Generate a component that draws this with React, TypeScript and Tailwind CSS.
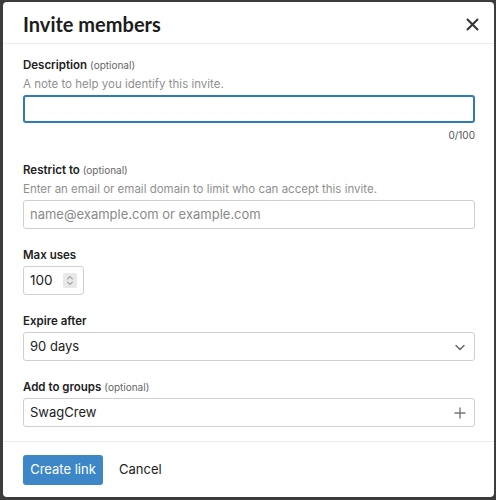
import React from "react";

const inter = { fontFamily: "Inter, 'Noto Sans', sans-serif" };

function Label({ text, optional }: { text: string; optional?: boolean }) {
  return (
    <div className="h-4 leading-4 text-[11.5px] font-semibold text-[#222]">
      {text}
      {optional && <span className="ml-[3px] text-[10px] font-normal text-[#666]">(optional)</span>}
    </div>
  );
}

function Help({ text }: { text: string }) {
  return <div className="mt-[2px] leading-[18px] text-[11.5px] text-[#8f8f8f]">{text}</div>;
}

export default function App() {
  return (
    <div className="w-[496px] h-[500px] bg-[#3c3c3c] pl-[3px] pt-[2px]" style={inter}>
      <div className="w-[491px] h-[495px] bg-white rounded-[4px] flex flex-col overflow-hidden">
        {/* header */}
        <div className="h-[42px] shrink-0 flex items-center justify-between pt-[3px] pl-5 pr-[14px] border-b border-[#ececec]">
          <h1 className="text-[20px] font-bold text-[#1c1c1c]" style={{ fontFamily: "Lato, sans-serif" }}>
            Invite members
          </h1>
          <button className="w-4 h-4 flex items-center justify-center text-[#333]">
            <svg width="13" height="13" viewBox="0 0 13 13" fill="none" stroke="currentColor" strokeWidth="2" strokeLinecap="round">
              <path d="M1.5 1.5l10 10M11.5 1.5l-10 10" />
            </svg>
          </button>
        </div>

        {/* body */}
        <div className="flex-1 pt-[13px] px-5">
          <Label text="Description" optional />
          <Help text="A note to help you identify this invite." />
          <div className="mt-[2px] h-[28px] w-[452px] rounded-[3px] border-2 border-[#2f79bd]" />
          <div className="mt-[5px] h-[14px] leading-[14px] w-[452px] text-right text-[10px] text-[#555]">0/100</div>

          <div className="mt-5">
            <Label text="Restrict to" optional />
            <Help text="Enter an email or email domain to limit who can accept this invite." />
            <div className="mt-[2px] h-[29px] w-[452px] rounded-[3px] border border-[#cfcfcf] flex items-center px-[6px] text-[13px] text-[#8a8a8a]">
              name@example.com or example.com
            </div>
          </div>

          <div className="mt-[18px]">
            <Label text="Max uses" />
            <div className="mt-[3px] h-[29px] w-[61px] rounded-[3px] border border-[#cfcfcf] flex items-center pl-[6px] pr-[6px] justify-between">
              <span className="text-[13.5px] text-[#222]">100</span>
              <span className="w-[14px] h-[15px] bg-[#e8e8e8] rounded-[2px] flex items-center justify-center">
                <svg width="8" height="11" viewBox="0 0 8 11" fill="none" stroke="#777" strokeWidth="1" strokeLinecap="round" strokeLinejoin="round">
                  <path d="M1.5 4l2.5-2.5L6.5 4M1.5 7l2.5 2.5L6.5 7" />
                </svg>
              </span>
            </div>
          </div>

          <div className="mt-[18px]">
            <Label text="Expire after" />
            <div className="mt-[3px] h-[29px] w-[452px] rounded-[3px] border border-[#cfcfcf] flex items-center justify-between pl-[6px] pr-[8px]">
              <span className="text-[13px] text-[#222]">90 days</span>
              <svg width="12" height="12" viewBox="0 0 12 12" fill="none" stroke="#666" strokeWidth="1.5" strokeLinecap="round" strokeLinejoin="round">
                <path d="M2 4.5l4 4 4-4" />
              </svg>
            </div>
          </div>

          <div className="mt-[18px]">
            <Label text="Add to groups" optional />
            <div className="mt-[3px] h-[29px] w-[452px] rounded-[3px] border border-[#cfcfcf] flex items-center justify-between pl-[6px] pr-[8px]">
              <span className="text-[13px] text-[#222]">SwagCrew</span>
              <svg width="12" height="12" viewBox="0 0 12 12" fill="none" stroke="#777" strokeWidth="1.4" strokeLinecap="round">
                <path d="M6 1v10M1 6h10" />
              </svg>
            </div>
          </div>
        </div>

        {/* footer */}
        <div className="shrink-0 border-t border-[#ececec] pt-[13px] pb-3 px-5 flex items-center gap-4">
          <button className="h-[30px] w-[80px] rounded-[3px] bg-[#3d87c8] text-white text-[13px]">Create link</button>
          <button className="text-[13px] text-[#222]">Cancel</button>
        </div>
      </div>
    </div>
  );
}
